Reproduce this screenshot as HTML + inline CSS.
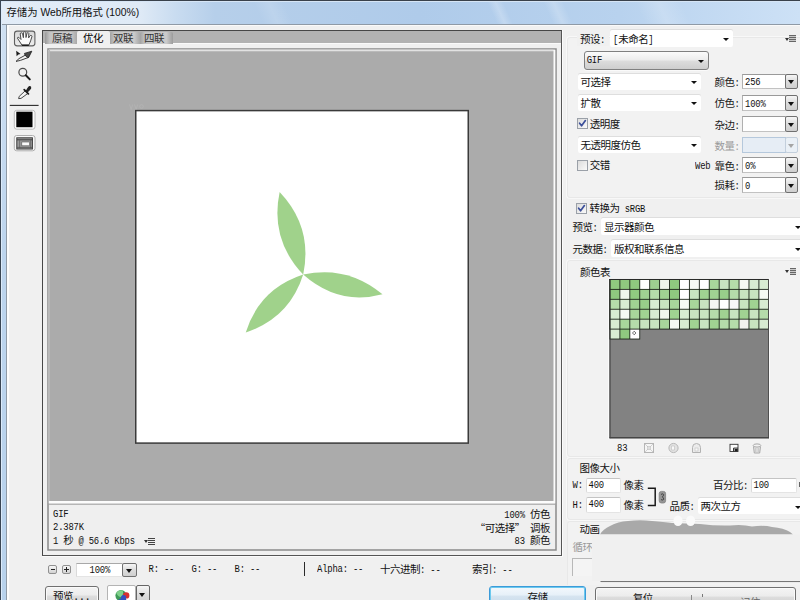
<!DOCTYPE html>
<html lang="zh-CN">
<head>
<meta charset="utf-8">
<title>存储为 Web所用格式 (100%)</title>
<style>
*{box-sizing:border-box;margin:0;padding:0}
html,body{width:800px;height:600px;overflow:hidden;background:#f0f0f0}
body{position:relative;font-family:"Liberation Mono","Noto Sans CJK SC","WenQuanYi Zen Hei",sans-serif;font-size:10.5px;letter-spacing:-0.5px;color:#111;line-height:12px}
.a{position:absolute}
.t{position:absolute;white-space:nowrap;line-height:12px;height:12px;margin-top:0.8px}
.lat{font-family:"Liberation Mono",monospace;font-size:8.9px;letter-spacing:-0.2px;display:inline-block;transform:scaleY(1.13);transform-origin:50% 72%;white-space:pre}
.q{font-family:"Noto Sans CJK SC","WenQuanYi Zen Hei",sans-serif}
/* title bar */
#title{left:0;top:0;width:800px;height:25px;background:linear-gradient(90deg,#e2ecf7 0,#dfeaf6 140px,#c9dcf0 175px,#b6cfea 215px,#afcbea 420px,#b8d2ee 620px,#cde1f6 800px)}
#title .tx{left:6.5px;top:4.5px;font-family:"Liberation Sans","Noto Sans CJK SC",sans-serif;font-size:10.35px;letter-spacing:0;line-height:16px;height:16px;color:#111}
/* white inputs */
.w{position:absolute;background:#fff;border-radius:2px;box-shadow:0 -1px 0 #dedede}
.in{position:absolute;background:#fff;border:1px solid #c2c2c2;border-top-color:#9a9a9a;border-left-color:#b0b0b0}
.in.f{border-color:#e4e4e4;border-top-color:#c4c4c4;border-left-color:#dadada;border-radius:2px}
.ab{position:absolute;border:1px solid #707070;border-radius:2px;background:linear-gradient(#f6f6f6,#dcdcdc 50%,#cfcfcf)}
.arr.b{border-left-width:3.5px;border-right-width:3.5px;border-top-width:4px}
.arr{position:absolute;width:0;height:0;border-left:3px solid transparent;border-right:3px solid transparent;border-top:3.5px solid #111}
.cb{position:absolute;width:11px;height:11px;background:linear-gradient(135deg,#dcdcdc,#fafafa);border:1px solid #9aa0a8}
.gl{position:absolute;background:#dcdcdc}
.hl{position:absolute;background:#fcfcfc}
.btn{position:absolute;border:1px solid #707070;border-radius:3px;background:linear-gradient(#f4f4f4,#ececec 45%,#dddddd 50%,#cfcfcf);box-shadow:inset 0 0 0 1px #fafafa}
</style>
</head>
<body>
<!-- ===== window frame ===== -->
<div class="a" id="title">
<div class="a" style="left:492px;top:1px;width:16px;height:23px;background:linear-gradient(90deg,rgba(255,255,255,0),rgba(255,255,255,.22) 50%,rgba(255,255,255,0));transform:skewX(24deg)"></div>
<div class="a" style="left:548px;top:1px;width:20px;height:23px;background:linear-gradient(90deg,rgba(255,255,255,0),rgba(255,255,255,.2) 50%,rgba(255,255,255,0));transform:skewX(24deg)"></div>
<div class="a" style="left:640px;top:1px;width:46px;height:23px;background:linear-gradient(90deg,rgba(255,255,255,0),rgba(255,255,255,.18) 50%,rgba(255,255,255,0));transform:skewX(24deg)"></div>
<div class="a" style="left:258px;top:1px;width:30px;height:23px;background:linear-gradient(90deg,rgba(255,255,255,0),rgba(255,255,255,.12) 50%,rgba(255,255,255,0));transform:skewX(24deg)"></div>
<div class="t tx">存储为 Web所用格式 (100%)</div></div>
<div class="a" style="left:0;top:0;width:800px;height:1px;background:#39414b"></div>
<div class="a" style="left:0;top:1px;width:800px;height:1px;background:#d6e5f5"></div>
<div class="a" style="left:0;top:24px;width:800px;height:1px;background:#8f9aa6"></div>
<div class="a" style="left:0;top:25px;width:6px;height:575px;background:linear-gradient(#cfe0f2,#bdd5ee 40%,#b8d2ec)"></div>
<div class="a" style="left:6px;top:24px;width:1px;height:576px;background:#8f9aa6"></div>
<div class="a" style="left:0;top:0;width:1px;height:600px;background:#3a4654"></div>
<div class="a" style="left:1px;top:2px;width:1px;height:598px;background:#dcebfb"></div>
<div class="a" style="left:7px;top:25px;width:793px;height:1px;background:#fafafa"></div>
<div class="a" style="left:7px;top:25px;width:1.5px;height:575px;background:#fcfcfc"></div>

<!-- ===== toolbar ===== -->
<svg class="a" style="left:10px;top:27px" width="32" height="76" viewBox="10 27 32 76">
 <defs><linearGradient id="hb" x1="0" y1="0" x2="0" y2="1"><stop offset="0" stop-color="#d8d8d8"/><stop offset="1" stop-color="#eeeeee"/></linearGradient></defs>
 <rect x="14.5" y="31.1" width="20.4" height="14.8" rx="2.6" fill="url(#hb)" stroke="#606060" stroke-width="1.1"/>
 <g transform="translate(14 30.9)">
  <path d="M3.4 7.2 Q3.6 6 4.8 6.4 L7 8.6 L6.2 3 Q6.4 1.7 7.6 1.9 Q8.4 2.1 8.6 3 L9.4 6.8 L9.6 1.5 Q10 0.8 10.8 0.8 Q11.8 0.9 11.8 1.7 L12 6.6 L13 2.3 Q13.6 1.5 14.4 1.9 Q15 2.3 14.8 3.1 L14.6 7 L16 4.9 Q16.8 4.1 17.6 4.7 Q18.2 5.3 17.8 6.1 L16.6 10 L14.8 14.3 L8 14.3 Z" fill="#fbfbfb" stroke="#4a4a4a" stroke-width="1" stroke-linejoin="round"/>
  <path d="M8 14.3 H14.8" stroke="#111" stroke-width="1.3"/>
 </g>
 <!-- slice select -->
 <path d="M16.2 50.8 L20.6 54 L18.4 54.4 L16.6 56.2 Z" fill="#1c1c1c"/>
 <path d="M25.6 55 L28.6 57.4 L20.4 60.4 L16 61.4 L19 58.6 Z" fill="#f2f2f2" stroke="#2a2a2a" stroke-width="0.9" stroke-linejoin="round"/>
 <path d="M24.4 53.4 L31.8 51.2 L28.8 57.2 L27.6 57.6 L25.2 55.4 Z" fill="#4a4a4a" stroke="#1e1e1e" stroke-width="0.8" stroke-linejoin="round"/>
 <!-- zoom -->
 <circle cx="22.8" cy="72.2" r="3.9" fill="#efefef" stroke="#4c4c4c" stroke-width="1.2"/>
 <path d="M25.8 75.2 L29.8 79.4" stroke="#1a1a1a" stroke-width="2" stroke-linecap="round"/>
 <!-- eyedropper -->
 <path d="M25 91 L27.6 93.6 L21 98.4 L18.6 98.6 L19.2 96.4 Z" fill="#f4f4f4" stroke="#333" stroke-width="0.9" stroke-linejoin="round"/>
 <path d="M24.2 89.6 L28.4 93.8" stroke="#1c1c1c" stroke-width="1.8" stroke-linecap="round"/>
 <path d="M26.4 90.8 L28.6 87.4 Q29.8 86 30.6 87.2 Q31 88.6 29.6 89.6 L27.4 91.8 Z" fill="#222" stroke="#222" stroke-width="1.2" stroke-linejoin="round"/>
</svg>
<svg class="a" style="left:8px;top:104px" width="34" height="52" viewBox="8 104 34 52">
 <path d="M9.8 105.4 H38.6" stroke="#2a2a2a" stroke-width="1.1"/>
 <rect x="14.3" y="110.3" width="20.7" height="18.9" rx="2.4" fill="#fbfbfb" stroke="#b4b4b4" stroke-width="0.9"/>
 <rect x="16.3" y="111.7" width="16.2" height="15.5" fill="#000"/>
 <rect x="14.3" y="135.5" width="20.7" height="15.3" rx="2.4" fill="#f8f8f8" stroke="#a6a6a6" stroke-width="0.9"/>
 <rect x="16.8" y="137.8" width="15.6" height="11.2" fill="#9a9a9a" stroke="#3c3c3c" stroke-width="1"/>
 <path d="M17 139.8 H32.2" stroke="#3c3c3c" stroke-width="1"/>
 <path d="M19.6 140 V148.6 M30.6 140 V148.6" stroke="#666" stroke-width="0.8"/>
 <rect x="21.8" y="142" width="7.8" height="3.8" fill="#fafafa" stroke="#555" stroke-width="0.6"/>
 <path d="M17 147.4 H32.2" stroke="#555" stroke-width="0.8"/>
</svg>
<!-- ===== tab panel + preview ===== -->
<div class="a" style="left:42px;top:30px;width:520px;height:526px;background:#f0f0f0;border:1px solid #464646;border-right-color:#555;border-bottom-color:#555"></div>
<div class="a" style="left:562px;top:30px;width:1px;height:526px;background:#fbfbfb"></div>
<div class="a" style="left:42px;top:556px;width:521px;height:1px;background:#fbfbfb"></div>
<div class="a" style="left:43px;top:31px;width:518px;height:13px;background:#b2b2b2"></div>
<div class="a" style="left:43px;top:43px;width:518px;height:1px;background:#fafafa"></div>
<!-- tabs -->
<div class="a" style="left:45px;top:32px;width:32px;height:12px;background:linear-gradient(90deg,#9a9a9a,#c4c4c4 15%,#cbcbcb 80%,#a8a8a8);border-radius:2px 2px 0 0"></div>
<div class="a" style="left:110px;top:32px;width:30px;height:12px;background:linear-gradient(90deg,#a2a2a2,#c4c4c4 15%,#cbcbcb 80%,#a8a8a8);border-radius:2px 2px 0 0"></div>
<div class="a" style="left:140px;top:32px;width:33px;height:12px;background:linear-gradient(90deg,#a2a2a2,#c4c4c4 15%,#cbcbcb 80%,#9c9c9c);border-radius:2px 2px 0 0"></div>
<div class="a" style="left:77px;top:31px;width:33px;height:14px;background:#f0f0f0;border-radius:2px 2px 0 0"></div>
<div class="t" style="left:52px;top:32px;color:#333">原稿</div>
<div class="t" style="left:83px;top:32px;color:#000">优化</div>
<div class="t" style="left:113px;top:32px;color:#333">双联</div>
<div class="t" style="left:144px;top:32px;color:#333">四联</div>
<!-- preview well + info frame -->
<svg class="a" style="left:46px;top:47px" width="512" height="506" viewBox="46 47 512 506">
  <rect x="48" y="49" width="508" height="501" fill="#efefef" stroke="#8a8a8a" stroke-width="1.5"/>
  <rect x="48.75" y="49.75" width="506.5" height="453.6" fill="#fcfcfc"/>
  <path d="M48.75 50.5 H553.5" stroke="#e2e2e2" stroke-width="1.3"/>
  <path d="M49.4 49.8 V501" stroke="#b8b8b8" stroke-width="1.3"/>
  <rect x="50" y="51.2" width="503.5" height="449.8" fill="#ababab"/>
  <path d="M48.75 504.2 H555.25" stroke="#9c9c9c" stroke-width="1"/>
  <rect x="135.75" y="110.6" width="332.5" height="332.5" fill="#ffffff" stroke="#3a3a3a" stroke-width="1.5"/>
  <g fill="#a0d28b">
    <path transform="translate(303.2 274.6) rotate(-105.9)" d="M0 0 Q43 -22.5 86 0 Q43 22.5 0 0Z"/>
    <path transform="translate(303.2 274.6) rotate(13.9)" d="M0 0 Q40 -20 81.7 0 Q42 22 0 0Z"/>
    <path transform="translate(303.2 274.6) rotate(134.8)" d="M0 0 Q41 -21 81.5 0 Q41 21 0 0Z"/>
  </g>
  <g opacity=".2" fill="none" stroke="#dcdcdc" stroke-width="0.8"><path d="M129.5 104.5 l1.6 5 l1.6 -5 M134.5 104.5 l1.6 5 l1.6 -5"/><circle cx="141.5" cy="106.5" r="1.8"/></g>
</svg>
<div class="t lat" style="left:53px;top:508px">GIF</div>
<div class="t lat" style="left:53px;top:521px">2.387K</div>
<div class="t" style="left:53px;top:534px"><span class="lat">1 </span>秒<span class="lat"> @ 56.6 Kbps</span></div>
<div class="arr" style="left:143.5px;top:540px;border-left-width:2px;border-right-width:2px;border-top-width:3px;border-top-color:#333"></div>
<div class="a" style="left:148px;top:537.5px;width:6.5px;height:7px;background:repeating-linear-gradient(#444 0,#444 1px,transparent 1px,transparent 2px)"></div>
<div class="t" style="right:250px;top:508px"><span class="lat">100% </span>仿色</div>
<div class="t" style="right:250px;top:521px"><span class="q">“</span>可选择<span class="q">”</span><span class="lat"> </span>调板</div>
<div class="t" style="right:250px;top:534px"><span class="lat">83 </span>颜色</div>

<!-- ===== bottom bar ===== -->
<div class="a" style="left:48.4px;top:565px;width:9px;height:8.6px;border:1px solid #909090;border-radius:2px;background:linear-gradient(#f6f6f6,#d2d2d2)"></div>
<div class="a" style="left:50.5px;top:569px;width:4.4px;height:1.2px;background:#222"></div>
<div class="a" style="left:62px;top:565px;width:9px;height:8.6px;border:1px solid #909090;border-radius:2px;background:linear-gradient(#f6f6f6,#d2d2d2)"></div>
<div class="a" style="left:64px;top:569px;width:5px;height:1.2px;background:#222"></div>
<div class="a" style="left:66px;top:567px;width:1.2px;height:5px;background:#222"></div>
<div class="in f" style="left:75.5px;top:562.5px;width:47px;height:14px;border-top-color:#a8a8a8;border-radius:0"></div>
<div class="t lat" style="left:89.5px;top:563.8px">100%</div>
<div class="ab" style="left:122.4px;top:562.5px;width:14.2px;height:14px"></div>
<div class="arr b" style="left:126.2px;top:568.8px"></div>
<div class="t lat" style="left:148.5px;top:563.5px">R: --</div>
<div class="t lat" style="left:191.5px;top:563.5px">G: --</div>
<div class="t lat" style="left:234.5px;top:563.5px">B: --</div>
<div class="a" style="left:304px;top:562px;width:1.3px;height:14px;background:#2a2a2a"></div>
<div class="t lat" style="left:317px;top:563.5px">Alpha: --</div>
<div class="t" style="left:380px;top:563.5px">十六进制<span class="lat">: --</span></div>
<div class="t" style="left:472px;top:563.5px">索引<span class="lat">: --</span></div>
<!-- buttons -->
<div class="btn" style="left:45px;top:586px;width:54px;height:20px"></div>
<div class="t" style="left:53px;top:590.5px">预览...</div>
<div class="in" style="left:107px;top:584.5px;width:29px;height:20px;border-radius:2px;border-color:#b4b4b4"></div>
<svg class="a" style="left:113px;top:587px" width="20" height="13" viewBox="113 587 20 13">
  <circle cx="121" cy="595.6" r="5.6" fill="#3f9a58"/>
  <path d="M116.2 593 Q119 589.4 122.6 590.6 Q124 594 121.4 597 Q118.4 597.4 116.2 593Z" fill="#7fd08a"/>
  <path d="M118 600 Q124 596 126.4 599.4 L126 601 H118Z" fill="#2f56b8"/>
  <circle cx="126.2" cy="595.4" r="3.2" fill="#d83030"/>
  <circle cx="123.6" cy="597.6" r="2.6" fill="#3450c0"/>
</svg>
<div class="ab" style="left:136.3px;top:585px;width:13.4px;height:20px;border-color:#666"></div>
<div class="arr b" style="left:139.3px;top:593px"></div>
<div class="a" style="left:488.5px;top:586.3px;width:97px;height:20px;border:1.5px solid #3c9bd9;border-radius:3px;background:linear-gradient(#f3f8fc,#e6f0f8 45%,#d6e4f0 50%,#c8dbea);box-shadow:inset 0 0 0 1px #6cc9ee"></div>
<div class="t" style="left:527.5px;top:591px">存储</div>
<div class="btn" style="left:594.7px;top:587.3px;width:201.5px;height:20px"></div>
<div class="t" style="left:632.8px;top:592px">复位</div>
<div class="a" style="left:691px;top:595px;width:1px;height:6px;background:#8a8a8a"></div>
<div class="a" style="left:701.5px;top:594px;width:1px;height:2.5px;background:#777"></div>
<div class="t" style="left:740px;top:596px;color:#666">记住</div>

<!-- ===== right: preset + optimize group ===== -->
<div class="a" style="left:566.5px;top:37px;width:240px;height:161px;border:1px solid #e8e8e8;border-radius:3px 0 0 3px;background:#f2f2f2;box-shadow:0 0 0 1px #f8f8f8"></div>
<div class="a" style="left:577px;top:32px;width:32px;height:14px;background:#f0f0f0"></div>
<div class="t" style="left:580px;top:33px">预设<span class="lat">:</span></div>
<div class="w" style="left:610px;top:30px;width:123px;height:17px"></div>
<div class="t" style="left:613px;top:33px"><span class="lat">[</span>未命名<span class="lat">]</span></div>
<div class="arr" style="left:723.3px;top:38px"></div>
<div class="arr" style="left:784.5px;top:37.5px;border-left-width:2px;border-right-width:2px;border-top-width:3px;border-top-color:#333"></div>
<div class="a" style="left:789px;top:35px;width:7.3px;height:7px;background:repeating-linear-gradient(#666 0,#666 1px,#c8c8c8 1px,#c8c8c8 2px)"></div>
<!-- GIF -->
<div class="a" style="left:584px;top:50.5px;width:124.5px;height:19px;border:1px solid #808080;border-radius:3px;background:linear-gradient(#fbfbfb,#ededed 45%,#dcdcdc 55%,#cecece);box-shadow:0 1px 0 #fafafa"></div>
<div class="t lat" style="left:586.7px;top:54.3px">GIF</div>
<div class="arr" style="left:698px;top:59.5px"></div>
<div class="w" style="left:578px;top:74px;width:122.5px;height:16px"></div>
<div class="t" style="left:580.6px;top:76.0px">可选择</div>
<div class="arr" style="left:690.5px;top:80.5px"></div>
<div class="w" style="left:578px;top:95.4px;width:122.5px;height:16px"></div>
<div class="t" style="left:580.6px;top:97.5px">扩散</div>
<div class="arr" style="left:690.5px;top:102px"></div>
<div class="w" style="left:578px;top:137.2px;width:122.5px;height:16px"></div>
<div class="t" style="left:580.6px;top:139.5px">无透明度仿色</div>
<div class="arr" style="left:690.5px;top:144px"></div>
<div class="cb" style="left:577.2px;top:118.2px"></div><svg class="a" style="left:577.2px;top:118.2px" width="11" height="11" viewBox="0 0 11 11"><path d="M2.6 5.2 L4.6 7.8 L8.4 2.6" fill="none" stroke="#3b4f9a" stroke-width="1.7" stroke-linecap="round" stroke-linejoin="round"/></svg>
<div class="t" style="left:589.8px;top:117.8px">透明度</div>
<div class="cb" style="left:577.2px;top:159.8px"></div>
<div class="t" style="left:589.8px;top:159.5px">交错</div>
<div class="t" style="left:714.5px;top:76.0px;color:#1a1a1a">颜色<span class="lat">:</span></div>
<div class="in" style="left:742px;top:73.5px;width:43.5px;height:15.6px"></div>
<div class="t lat" style="left:745px;top:76.3px">256</div>
<div class="ab" style="left:785px;top:73.5px;width:13px;height:15.6px"></div>
<div class="arr b" style="left:788px;top:80.0px"></div>
<div class="t" style="left:714.5px;top:97.5px;color:#1a1a1a">仿色<span class="lat">:</span></div>
<div class="in" style="left:742px;top:95px;width:43.5px;height:15.6px"></div>
<div class="t lat" style="left:745px;top:97.8px">100%</div>
<div class="ab" style="left:785px;top:95px;width:13px;height:15.6px"></div>
<div class="arr b" style="left:788px;top:101.5px"></div>
<div class="t" style="left:714.5px;top:118.8px;color:#1a1a1a">杂边<span class="lat">:</span></div>
<div class="in" style="left:742px;top:116.3px;width:43.5px;height:15.6px"></div>
<div class="ab" style="left:785px;top:116.3px;width:13px;height:15.6px"></div>
<div class="arr b" style="left:788px;top:122.8px"></div>
<div class="t" style="left:714.5px;top:139.8px;color:#9a9a9a">数量<span class="lat">:</span></div>
<div class="in" style="left:742px;top:137.3px;width:43.5px;height:15.6px;background:#e6edf5;border-color:#b5c8dc"></div>
<div class="ab" style="left:785px;top:137.3px;width:13px;height:15.6px;border-color:#c3cfdc;background:#eaf0f6"></div>
<div class="arr b" style="left:788px;top:143.8px;border-top-color:#a5a5a5"></div>
<div class="t lat" style="left:695px;top:159.8px">Web</div>
<div class="t" style="left:714.5px;top:159.8px;color:#1a1a1a">靠色<span class="lat">:</span></div>
<div class="in" style="left:742px;top:157.3px;width:43.5px;height:15.6px"></div>
<div class="t lat" style="left:745px;top:160.1px">0%</div>
<div class="ab" style="left:785px;top:157.3px;width:13px;height:15.6px"></div>
<div class="arr b" style="left:788px;top:163.8px"></div>
<div class="t" style="left:714.5px;top:179.7px;color:#1a1a1a">损耗<span class="lat">:</span></div>
<div class="in" style="left:742px;top:177.2px;width:43.5px;height:15.6px"></div>
<div class="t lat" style="left:745px;top:180px">0</div>
<div class="ab" style="left:785px;top:177.2px;width:13px;height:15.6px"></div>
<div class="arr b" style="left:788px;top:183.7px"></div>

<!-- ===== right: sRGB / preview / metadata / color table ===== -->
<div class="cb" style="left:576.3px;top:202.8px"></div><svg class="a" style="left:576.3px;top:202.8px" width="11" height="11" viewBox="0 0 11 11"><path d="M2.6 5.2 L4.6 7.8 L8.4 2.6" fill="none" stroke="#3b4f9a" stroke-width="1.7" stroke-linecap="round" stroke-linejoin="round"/></svg>
<div class="t" style="left:589.5px;top:202.5px">转换为<span class="lat"> sRGB</span></div>
<div class="t" style="left:572.5px;top:221.5px">预览<span class="lat">:</span></div>
<div class="w" style="left:601px;top:218px;width:205px;height:17px"></div>
<div class="t" style="left:604px;top:221.5px">显示器颜色</div>
<div class="arr" style="left:795px;top:226.3px"></div>
<div class="t" style="left:572.5px;top:243px">元数据<span class="lat">:</span></div>
<div class="w" style="left:610.6px;top:240px;width:195px;height:17px"></div>
<div class="t" style="left:614px;top:243px">版权和联系信息</div>
<div class="arr" style="left:795px;top:247.5px"></div>
<!-- color table group -->
<div class="a" style="left:566.5px;top:260px;width:240px;height:197px;border:1px solid #e8e8e8;border-radius:3px 0 0 3px;background:#f2f2f2;box-shadow:0 0 0 1px #f8f8f8"></div>
<div class="t" style="left:580px;top:266px">颜色表</div>
<div class="arr" style="left:784.8px;top:269.5px;border-left-width:2px;border-right-width:2px;border-top-width:3px;border-top-color:#333"></div>
<div class="a" style="left:789.5px;top:267.5px;width:6.8px;height:7px;background:repeating-linear-gradient(#666 0,#666 1px,#c8c8c8 1px,#c8c8c8 2px)"></div>
<div class="a" style="left:608px;top:278px;width:161.5px;height:161px;background:#fbfbfb"></div>
<svg class="a" style="left:609px;top:278px" width="161" height="162" viewBox="-0.5 -1 161 162">
<rect x="0" y="0" width="159.4" height="159.2" fill="#828282"/>
<rect x="0" y="0" width="159.4" height="50.55" fill="#1c241a"/>
<rect x="0" y="0" width="30.69" height="60.48" fill="#1c241a"/>
<rect x="0.90" y="0.90" width="9.03" height="9.03" fill="#8fc97f"/><rect x="10.83" y="0.90" width="9.03" height="9.03" fill="#8fc97f"/><rect x="20.76" y="0.90" width="9.03" height="9.03" fill="#8fc97f"/><rect x="30.69" y="0.90" width="9.03" height="9.03" fill="#ffffff"/><rect x="40.62" y="0.90" width="9.03" height="9.03" fill="#9ed090"/><rect x="50.55" y="0.90" width="9.03" height="9.03" fill="#eef5ea"/><rect x="60.48" y="0.90" width="9.03" height="9.03" fill="#8fc97f"/><rect x="70.41" y="0.90" width="9.03" height="9.03" fill="#ffffff"/><rect x="80.34" y="0.90" width="9.03" height="9.03" fill="#f6faf4"/><rect x="90.27" y="0.90" width="9.03" height="9.03" fill="#ffffff"/><rect x="100.20" y="0.90" width="9.03" height="9.03" fill="#a8d69b"/><rect x="110.13" y="0.90" width="9.03" height="9.03" fill="#c8e4c0"/><rect x="120.06" y="0.90" width="9.03" height="9.03" fill="#b5dcaa"/><rect x="129.99" y="0.90" width="9.03" height="9.03" fill="#f6faf4"/><rect x="139.92" y="0.90" width="9.03" height="9.03" fill="#d8ecd2"/><rect x="149.85" y="0.90" width="9.03" height="9.03" fill="#d8ecd2"/><rect x="0.90" y="10.83" width="9.03" height="9.03" fill="#8fc97f"/><rect x="10.83" y="10.83" width="9.03" height="9.03" fill="#f0f7ed"/><rect x="20.76" y="10.83" width="9.03" height="9.03" fill="#90ca80"/><rect x="30.69" y="10.83" width="9.03" height="9.03" fill="#a0d292"/><rect x="40.62" y="10.83" width="9.03" height="9.03" fill="#b5dcaa"/><rect x="50.55" y="10.83" width="9.03" height="9.03" fill="#a0d292"/><rect x="60.48" y="10.83" width="9.03" height="9.03" fill="#8fc97f"/><rect x="70.41" y="10.83" width="9.03" height="9.03" fill="#ffffff"/><rect x="80.34" y="10.83" width="9.03" height="9.03" fill="#c8e4c0"/><rect x="90.27" y="10.83" width="9.03" height="9.03" fill="#a0d292"/><rect x="100.20" y="10.83" width="9.03" height="9.03" fill="#a0d292"/><rect x="110.13" y="10.83" width="9.03" height="9.03" fill="#98ce8a"/><rect x="120.06" y="10.83" width="9.03" height="9.03" fill="#b5dcaa"/><rect x="129.99" y="10.83" width="9.03" height="9.03" fill="#c8e4c0"/><rect x="139.92" y="10.83" width="9.03" height="9.03" fill="#c8e4c0"/><rect x="149.85" y="10.83" width="9.03" height="9.03" fill="#f6faf4"/><rect x="0.90" y="20.76" width="9.03" height="9.03" fill="#b5dcaa"/><rect x="10.83" y="20.76" width="9.03" height="9.03" fill="#d8ecd2"/><rect x="20.76" y="20.76" width="9.03" height="9.03" fill="#a0d292"/><rect x="30.69" y="20.76" width="9.03" height="9.03" fill="#98ce8a"/><rect x="40.62" y="20.76" width="9.03" height="9.03" fill="#d8ecd2"/><rect x="50.55" y="20.76" width="9.03" height="9.03" fill="#c8e4c0"/><rect x="60.48" y="20.76" width="9.03" height="9.03" fill="#a8d69b"/><rect x="70.41" y="20.76" width="9.03" height="9.03" fill="#f6faf4"/><rect x="80.34" y="20.76" width="9.03" height="9.03" fill="#a8d69b"/><rect x="90.27" y="20.76" width="9.03" height="9.03" fill="#c8e4c0"/><rect x="100.20" y="20.76" width="9.03" height="9.03" fill="#f4f6f2"/><rect x="110.13" y="20.76" width="9.03" height="9.03" fill="#ffffff"/><rect x="120.06" y="20.76" width="9.03" height="9.03" fill="#f8f8f8"/><rect x="129.99" y="20.76" width="9.03" height="9.03" fill="#c8e4c0"/><rect x="139.92" y="20.76" width="9.03" height="9.03" fill="#a0d292"/><rect x="149.85" y="20.76" width="9.03" height="9.03" fill="#d8ecd2"/><rect x="0.90" y="30.69" width="9.03" height="9.03" fill="#d8ecd2"/><rect x="10.83" y="30.69" width="9.03" height="9.03" fill="#f6faf4"/><rect x="20.76" y="30.69" width="9.03" height="9.03" fill="#a8d69b"/><rect x="30.69" y="30.69" width="9.03" height="9.03" fill="#a0d292"/><rect x="40.62" y="30.69" width="9.03" height="9.03" fill="#d8ecd2"/><rect x="50.55" y="30.69" width="9.03" height="9.03" fill="#f0f7ed"/><rect x="60.48" y="30.69" width="9.03" height="9.03" fill="#a0d292"/><rect x="70.41" y="30.69" width="9.03" height="9.03" fill="#d8ecd2"/><rect x="80.34" y="30.69" width="9.03" height="9.03" fill="#c8e4c0"/><rect x="90.27" y="30.69" width="9.03" height="9.03" fill="#c8e4c0"/><rect x="100.20" y="30.69" width="9.03" height="9.03" fill="#b5dcaa"/><rect x="110.13" y="30.69" width="9.03" height="9.03" fill="#a0d292"/><rect x="120.06" y="30.69" width="9.03" height="9.03" fill="#c8e4c0"/><rect x="129.99" y="30.69" width="9.03" height="9.03" fill="#a0d292"/><rect x="139.92" y="30.69" width="9.03" height="9.03" fill="#c8e4c0"/><rect x="149.85" y="30.69" width="9.03" height="9.03" fill="#b5dcaa"/><rect x="0.90" y="40.62" width="9.03" height="9.03" fill="#d8ecd2"/><rect x="10.83" y="40.62" width="9.03" height="9.03" fill="#a8d69b"/><rect x="20.76" y="40.62" width="9.03" height="9.03" fill="#b5dcaa"/><rect x="30.69" y="40.62" width="9.03" height="9.03" fill="#c8e4c0"/><rect x="40.62" y="40.62" width="9.03" height="9.03" fill="#c8e4c0"/><rect x="50.55" y="40.62" width="9.03" height="9.03" fill="#a8d69b"/><rect x="60.48" y="40.62" width="9.03" height="9.03" fill="#f6faf4"/><rect x="70.41" y="40.62" width="9.03" height="9.03" fill="#d8ecd2"/><rect x="80.34" y="40.62" width="9.03" height="9.03" fill="#a0d292"/><rect x="90.27" y="40.62" width="9.03" height="9.03" fill="#c8e4c0"/><rect x="100.20" y="40.62" width="9.03" height="9.03" fill="#a0d292"/><rect x="110.13" y="40.62" width="9.03" height="9.03" fill="#b5dcaa"/><rect x="120.06" y="40.62" width="9.03" height="9.03" fill="#b5dcaa"/><rect x="129.99" y="40.62" width="9.03" height="9.03" fill="#f3f3ee"/><rect x="139.92" y="40.62" width="9.03" height="9.03" fill="#c8e4c0"/><rect x="149.85" y="40.62" width="9.03" height="9.03" fill="#d8ecd2"/><rect x="0.90" y="50.55" width="9.03" height="9.03" fill="#d8ecd2"/><rect x="10.83" y="50.55" width="9.03" height="9.03" fill="#8fc97f"/><rect x="20.76" y="50.55" width="9.03" height="9.03" fill="#ffffff"/>
<path d="M0.45 0 V159.2 M0 0.45 H159.4" stroke="#2a2a2a" stroke-width="0.9" fill="none"/>
<path d="M159 0 V159.2" stroke="#4a4a4a" stroke-width="0.9" fill="none"/><path d="M0 158.7 H159.4" stroke="#454545" stroke-width="1.4" fill="none"/>
<path d="M24.7 52.2 l1.7 1.8 l-1.7 1.8 l-1.7 -1.8z" fill="#fff" stroke="#333" stroke-width="0.7"/>
</svg>
<div class="t lat" style="left:617px;top:442px">83</div>
<!-- table icons -->
<svg class="a" style="left:640px;top:440px" width="130" height="16" viewBox="640 440 130 16">
 <rect x="644.5" y="443.5" width="9" height="9" fill="#f6f6f6" stroke="#b5b5b5"/><path d="M645 444 l8 8 M653 444 l-8 8" stroke="#c8c8c8" stroke-width="0.8"/><rect x="647.5" y="446.5" width="3" height="3" fill="#e0e0e0" stroke="#bbb" stroke-width="0.5"/>
 <circle cx="673.5" cy="448" r="4.6" fill="#e2e2e2" stroke="#b8b8b8"/><path d="M671.5 446 h3 v4 h-3z" fill="#f8f8f8" stroke="#bdbdbd" stroke-width="0.6"/>
 <path d="M692.5 452.5 v-5 a4 4 0 0 1 8 0 v5z" fill="#ececec" stroke="#b2b2b2"/><rect x="695" y="448" width="3" height="3" fill="#f8f8f8" stroke="#c0c0c0" stroke-width="0.6"/>
 <rect x="730" y="444.3" width="8" height="7.2" fill="#fdfdfd" stroke="#333" stroke-width="0.9"/><path d="M733.6 451.5 v-3.4 h4.4" fill="none" stroke="#222" stroke-width="1"/><rect x="734.6" y="449" width="3.2" height="2.4" fill="#1e1e1e"/>
 <path d="M753.5 446.5 h7 l-0.8 6.5 h-5.4z" fill="#e8e8e8" stroke="#a8a8a8"/><ellipse cx="757" cy="445.5" rx="3.8" ry="1.6" fill="#f2f2f2" stroke="#a8a8a8"/><path d="M755.5 448 v4 M757 448 v4 M758.5 448 v4" stroke="#b8b8b8" stroke-width="0.6"/>
</svg>

<!-- ===== right: image size + animation ===== -->
<div class="a" style="left:566.5px;top:457.5px;width:240px;height:62px;border:1px solid #e8e8e8;border-radius:3px 0 0 3px;background:#f2f2f2;box-shadow:0 0 0 1px #f8f8f8"></div>
<div class="t" style="left:579.5px;top:462.5px">图像大小</div>
<div class="t lat" style="left:572.5px;top:479.5px">W:</div>
<div class="in f" style="left:585.5px;top:477.5px;width:35.5px;height:15.5px"></div>
<div class="t lat" style="left:588.5px;top:479px">400</div>
<div class="t" style="left:623.5px;top:479.5px">像素</div>
<div class="t lat" style="left:572.5px;top:499.5px">H:</div>
<div class="in f" style="left:585.5px;top:497px;width:35.5px;height:15.5px"></div>
<div class="t lat" style="left:588.5px;top:498.5px">400</div>
<div class="t" style="left:623.5px;top:499.5px">像素</div>
<svg class="a" style="left:646px;top:485px" width="22" height="26" viewBox="646 485 22 26">
 <path d="M647.8 488.2 H655.2 V505.6 H647.8" fill="none" stroke="#1a1a1a" stroke-width="1.5"/>
 <rect x="659.2" y="491.4" width="6.4" height="11.6" rx="2.2" fill="#959595" stroke="#808080" stroke-width="0.8"/>
 <path d="M661 494.5 q1.4 -1.4 2.6 0 q0 1.6 -1.3 2.4 q1.6 1 1.3 2.6 q-1.4 1.2 -2.6 0" fill="none" stroke="#3a3a3a" stroke-width="0.9"/>
</svg>
<div class="t" style="left:713px;top:479.5px">百分比<span class="lat">:</span></div>
<div class="in f" style="left:750.5px;top:477.5px;width:46px;height:15.5px"></div>
<div class="t lat" style="left:753.5px;top:479px">100</div>
<div class="a" style="left:798.5px;top:482px;width:2px;height:5px;background:#666"></div>
<div class="t" style="left:669.5px;top:500.5px">品质<span class="lat">:</span></div>
<div class="w" style="left:697.5px;top:498px;width:108px;height:16px"></div>
<div class="t" style="left:700.5px;top:500.5px">两次立方</div>
<div class="arr" style="left:794.5px;top:505.5px"></div>
<!-- animation group (partly obscured by a blurred patch in the screenshot) -->
<div class="a" style="left:566.5px;top:521px;width:240px;height:64px;border-top:1px solid #e8e8e8;border-left:1px solid #e8e8e8;border-radius:3px 0 0 0;background:#f2f2f2"></div>
<div class="t" style="left:579.5px;top:523.5px">动画</div>
<div class="t" style="left:572.5px;top:541px;color:#9a9a9a">循环</div>
<div class="a" style="left:572px;top:558px;width:40px;height:18px;border:1px solid #b8b8b8;border-right:0;border-bottom:0;background:#f4f4f4"></div>
<svg class="a" style="left:590px;top:512px" width="210" height="74" viewBox="590 512 210 74">
 <defs><linearGradient id="sh" x1="0" y1="0" x2="0" y2="1"><stop offset="0" stop-color="#f0f0f0" stop-opacity="0"/><stop offset="0.5" stop-color="#444" stop-opacity=".85"/><stop offset="1" stop-color="#f0f0f0" stop-opacity="0"/></linearGradient></defs>
 <path d="M600 534.5 Q603 529 610 526 Q618 521.5 628 521 Q640 519.5 652 521 Q664 522 672 523 L700 524 Q716 526 730 525.5 Q742 524 752 526.5 Q764 525 772 527 Q784 528 790 532 L793 534.5 Z" fill="#a9a9a9"/>
 <rect x="592" y="534.5" width="208" height="46.5" fill="#f0f0f0"/>
 <ellipse cx="678" cy="520.8" rx="4.6" ry="5.2" fill="#fafafa"/>
 <ellipse cx="690.6" cy="520.8" rx="4.6" ry="5.2" fill="#fafafa"/>
 <rect x="600.5" y="580.4" width="200" height="2.4" fill="url(#sh)"/>
</svg>
</body>
</html>
